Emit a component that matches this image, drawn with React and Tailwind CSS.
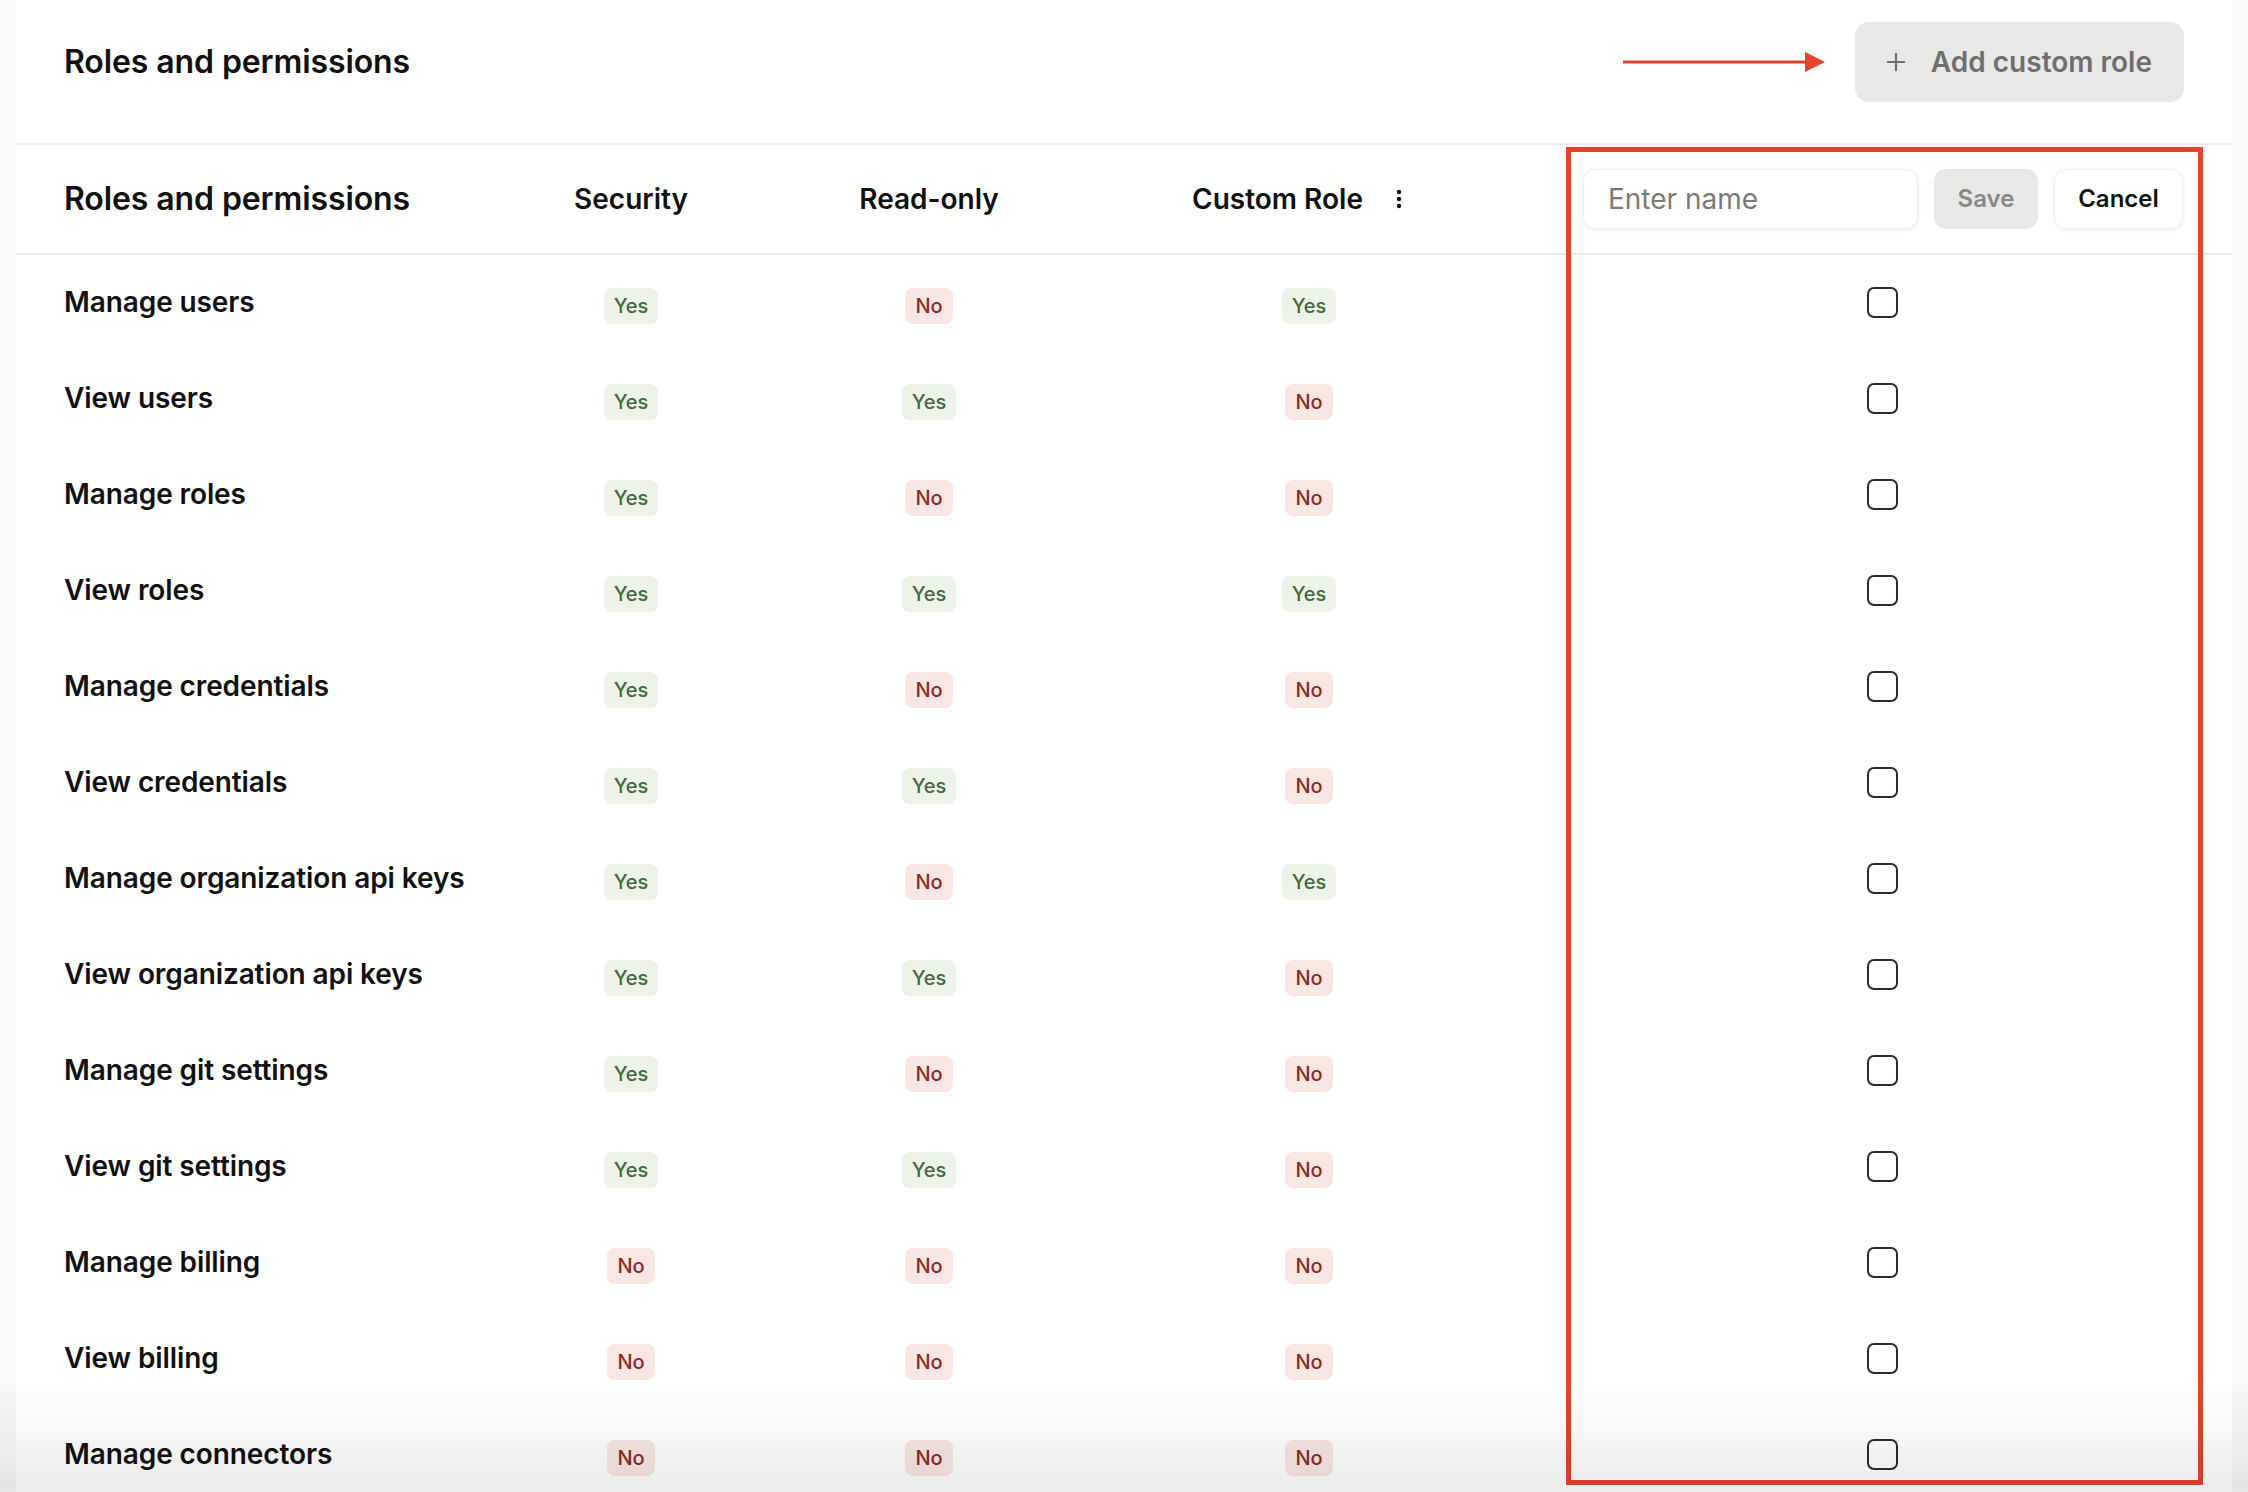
import { Plus } from "lucide-react";

const ROWS = [
  ["Manage users", true, false, true],
  ["View users", true, true, false],
  ["Manage roles", true, false, false],
  ["View roles", true, true, true],
  ["Manage credentials", true, false, false],
  ["View credentials", true, true, false],
  ["Manage organization api keys", true, false, true],
  ["View organization api keys", true, true, false],
  ["Manage git settings", true, false, false],
  ["View git settings", true, true, false],
  ["Manage billing", false, false, false],
  ["View billing", false, false, false],
  ["Manage connectors", false, false, false],
];

const COLS = "grid grid-cols-[466px_298px_298px_462px_1fr]";

function Badge({ yes }) {
  return (
    <span
      className={`mt-[6px] flex h-[36px] items-center rounded-[8px] px-[10px] text-[20px] font-medium ${
        yes ? "bg-[#edf3e9] text-[#436a3a]" : "bg-[#f7e6e4] text-[#8a2b21]"
      }`}
    >
      {yes ? "Yes" : "No"}
    </span>
  );
}

function Arrow() {
  return (
    <svg width="202" height="22" viewBox="0 0 202 22">
      <line x1="0" y1="11" x2="184" y2="11" stroke="#e5432d" strokeWidth="3" />
      <polygon points="182,1 202,11 182,21" fill="#e5432d" />
    </svg>
  );
}

function Kebab() {
  return (
    <svg width="6" height="20" viewBox="0 0 6 20">
      <circle cx="3" cy="3" r="2.2" fill="#111" />
      <circle cx="3" cy="10" r="2.2" fill="#111" />
      <circle cx="3" cy="17" r="2.2" fill="#111" />
    </svg>
  );
}

export default function App() {
  return (
    <div className="relative h-[1492px] w-[2248px] overflow-hidden bg-[#f7f7f7] font-[family-name:Inter,sans-serif] text-[#111]">
      <div className="ml-[16px] h-full w-[2216px] bg-white">
        {/* page header */}
        <div className="flex h-[145px] items-start justify-between border-b-2 border-[#ebebeb] pl-[48px] pr-[48px] pt-[22px]">
          <h1 className="flex h-[80px] items-center text-[32px] font-semibold tracking-[-0.1px]">Roles and permissions</h1>
          <div className="flex items-center gap-[30px]">
            <Arrow />
            <button className="flex h-[80px] items-center gap-[21px] rounded-[14px] bg-[#e8e8e7] pl-[27px] pr-[32px] text-[28px] font-semibold text-[#6f6f6f]">
              <Plus className="h-[28px] w-[28px]" strokeWidth={1.9} />
              Add custom role
            </button>
          </div>
        </div>

        {/* table header */}
        <div className={`${COLS} h-[110px] items-center border-b-2 border-[#ebebeb]`}>
          <div className="pl-[48px] text-[32px] font-semibold tracking-[-0.1px]">Roles and permissions</div>
          <div className="text-center text-[28px] font-semibold">Security</div>
          <div className="text-center text-[28px] font-semibold">Read-only</div>
          <div className="flex items-center justify-center gap-[33px] pr-[24px]">
            <span className="text-[28px] font-semibold">Custom Role</span>
            <Kebab />
          </div>
          <div className="flex items-center justify-center gap-[16px] pr-[6px]">
            <div className="flex h-[60px] w-[335px] items-center rounded-[12px] border border-[#efefef] bg-white pl-[24px] text-[28px] text-[#7a7a7a] shadow-[0_1px_4px_rgba(0,0,0,0.08)]">
              Enter name
            </div>
            <button className="h-[60px] w-[104px] rounded-[12px] bg-[#e8e8e7] text-[24px] font-semibold text-[#888]">
              Save
            </button>
            <button className="h-[60px] w-[129px] rounded-[12px] border border-[#efefef] bg-white text-[24px] font-semibold text-[#111] shadow-[0_1px_4px_rgba(0,0,0,0.08)]">
              Cancel
            </button>
          </div>
        </div>

        {/* rows */}
        {ROWS.map(([label, sec, ro, custom]) => (
          <div key={label} className={`${COLS} h-[96px] items-center`}>
            <div className="mb-[3px] pl-[48px] text-[28px] font-semibold tracking-[-0.1px]">{label}</div>
            <div className="flex justify-center">
              <Badge yes={sec} />
            </div>
            <div className="flex justify-center">
              <Badge yes={ro} />
            </div>
            <div className="flex justify-center">
              <Badge yes={custom} />
            </div>
            <div className="mb-[2px] flex justify-center pr-[8px]">
              <div className="h-[31px] w-[31px] rounded-[7px] border-2 border-[#2b2b2b]" />
            </div>
          </div>
        ))}
      </div>

      {/* annotation box around the new column */}
      <div className="absolute left-[1566px] top-[147px] h-[1338px] w-[637px] border-[5px] border-[#e5432d]" />

      {/* bottom fade */}
      <div className="pointer-events-none absolute bottom-0 left-0 right-0 h-[110px] bg-gradient-to-b from-transparent to-black/[0.08]" />
    </div>
  );
}
